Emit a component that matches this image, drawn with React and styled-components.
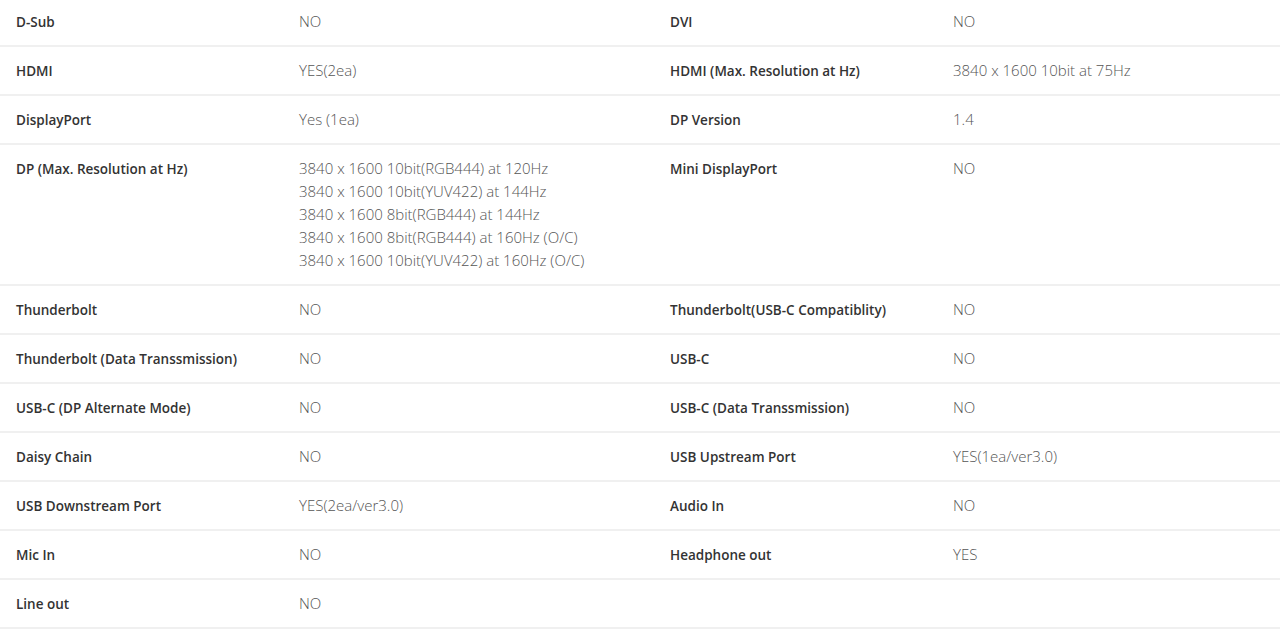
import React from "react";
import styled, { createGlobalStyle } from "styled-components";

const Global = createGlobalStyle`
  html, body { margin: 0; padding: 0; background: #fff; }
  body { font-family: "Open Sans", "Noto Sans", sans-serif; }
`;

const Table = styled.div`
  width: 1280px;
  display: flex;
  flex-direction: column;
`;

const Label = styled.div`
  padding: 13px 16px 11px;
  font-family: "Open Sans", "Noto Sans", sans-serif;
  font-size: 13.5px;
  line-height: 23px;
  font-weight: 600;
  color: #333;
`;

const Value = styled.div`
  padding: 12px 16px;
  font-family: "Open Sans", "Noto Sans", sans-serif;
  font-size: 15px;
  line-height: 23px;
  font-weight: 300;
  color: #555;
  white-space: nowrap;
`;

const Row = styled.div`
  display: grid;
  grid-template-columns: 283px 371px 283px 343px;
  border-bottom: 2px solid #f0f0f0;
  &:first-child > ${Label} { padding-top: 11px; }
  &:first-child > ${Value} { padding-top: 10px; }
`;

const rows = [
  [["D-Sub", "NO"], ["DVI", "NO"]],
  [["HDMI", "YES(2ea)"], ["HDMI (Max. Resolution at Hz)", "3840 x 1600 10bit at 75Hz"]],
  [["DisplayPort", "Yes (1ea)"], ["DP Version", "1.4"]],
  [
    [
      "DP (Max. Resolution at Hz)",
      [
        "3840 x 1600 10bit(RGB444) at 120Hz",
        "3840 x 1600 10bit(YUV422) at 144Hz",
        "3840 x 1600 8bit(RGB444) at 144Hz",
        "3840 x 1600 8bit(RGB444) at 160Hz (O/C)",
        "3840 x 1600 10bit(YUV422) at 160Hz (O/C)",
      ],
    ],
    ["Mini DisplayPort", "NO"],
  ],
  [["Thunderbolt", "NO"], ["Thunderbolt(USB-C Compatiblity)", "NO"]],
  [["Thunderbolt (Data Transsmission)", "NO"], ["USB-C", "NO"]],
  [["USB-C (DP Alternate Mode)", "NO"], ["USB-C (Data Transsmission)", "NO"]],
  [["Daisy Chain", "NO"], ["USB Upstream Port", "YES(1ea/ver3.0)"]],
  [["USB Downstream Port", "YES(2ea/ver3.0)"], ["Audio In", "NO"]],
  [["Mic In", "NO"], ["Headphone out", "YES"]],
  [["Line out", "NO"], ["", ""]],
];

const renderValue = (v) =>
  Array.isArray(v)
    ? v.map((line, i) => (
        <React.Fragment key={i}>
          {line}
          {i < v.length - 1 && <br />}
        </React.Fragment>
      ))
    : v;

export default function App() {
  return (
    <>
      <Global />
      <Table>
        {rows.map((pairs, i) => (
          <Row key={i}>
            {pairs.map(([l, v], j) => (
              <React.Fragment key={j}>
                <Label>{l}</Label>
                <Value>{renderValue(v)}</Value>
              </React.Fragment>
            ))}
          </Row>
        ))}
      </Table>
    </>
  );
}
